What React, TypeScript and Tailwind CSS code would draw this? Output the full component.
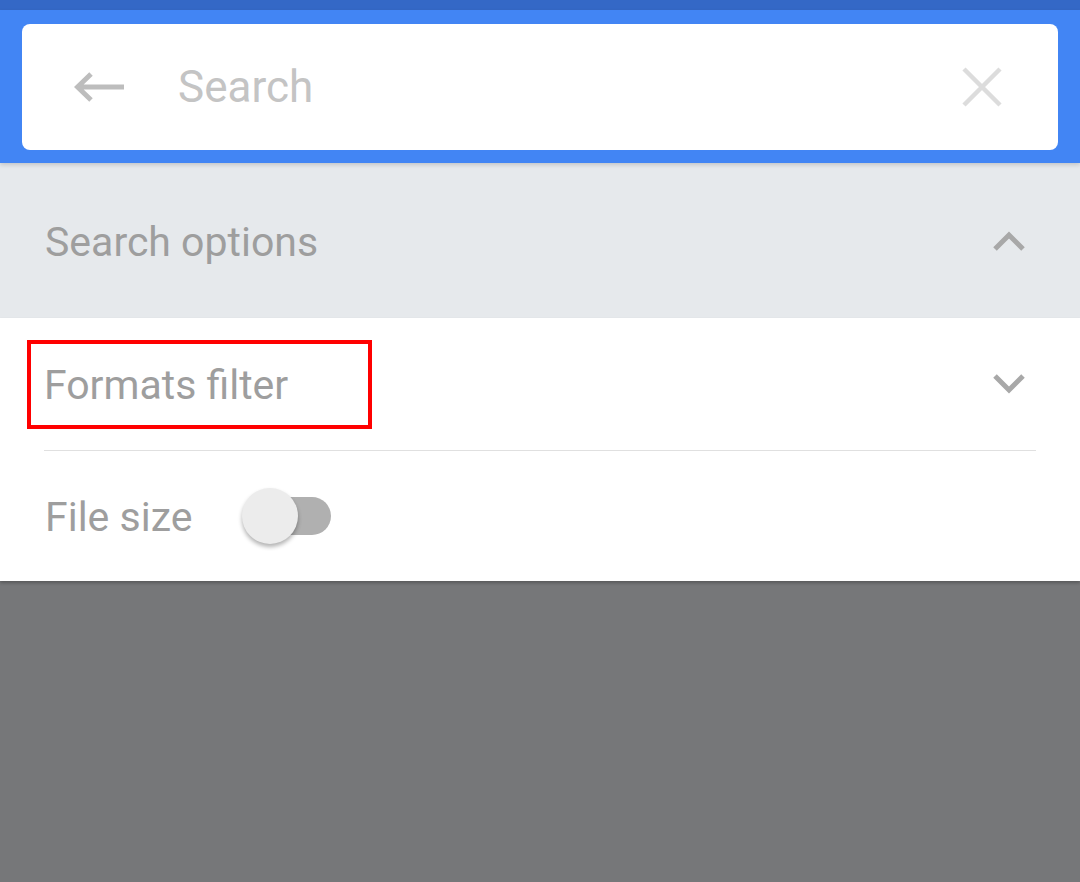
import React from "react";

export default function App() {
  return (
    <div
      className="w-[1080px] h-[882px] flex flex-col bg-[#767779] overflow-hidden"
      style={{ fontFamily: "Roboto, 'Noto Sans', sans-serif" }}
    >
      <div className="h-[10px] bg-[#3468c6] shrink-0" />
      <div className="bg-[#4285f4] h-[153px] shrink-0 px-[22px] pt-[14px] relative z-10 shadow-[0_2px_4px_rgba(0,0,0,0.15)]">
        <div className="h-[126px] bg-white rounded-[8px] flex items-center">
          <div className="w-[156px] flex items-center pl-[52px]">
            <svg width="52" height="30" viewBox="0 0 52 30">
              <path d="M50 15H4M17 2L3.5 15L17 28" fill="none" stroke="#bdbdbd" strokeWidth="5" />
            </svg>
          </div>
          <div className="flex-1 text-[44px] text-[#c4c4c4] leading-none">Search</div>
          <div className="w-[96px] flex items-center">
            <svg width="40" height="40" viewBox="0 0 40 40">
              <path d="M2 2L38 38M38 2L2 38" stroke="#dcdcdc" strokeWidth="4.5" />
            </svg>
          </div>
        </div>
      </div>
      <div className="h-[155px] bg-[#e6e9ec] flex items-center justify-between pl-[45px] pr-[54px] shrink-0">
        <span className="text-[41px] text-[#9e9e9e] leading-none pt-[4px]">Search options</span>
        <svg width="34" height="22" viewBox="0 0 34 22">
          <path d="M3 19L17 5L31 19" fill="none" stroke="#a8a8a8" strokeWidth="5" />
        </svg>
      </div>
      <div className="bg-white shrink-0 relative z-10 shadow-[0_2px_3px_rgba(0,0,0,0.25)]">
        <div className="h-[132px] flex items-center justify-between pl-[27px] pr-[54px]">
          <div className="w-[345px] h-[89px] border-[4px] border-[#ff0000] flex items-center pl-[13px]">
            <span className="text-[41px] text-[#9e9e9e] leading-none pt-[3px]">Formats filter</span>
          </div>
          <svg width="34" height="22" viewBox="0 0 34 22">
            <path d="M3 3L17 17L31 3" fill="none" stroke="#a8a8a8" strokeWidth="5" />
          </svg>
        </div>
        <div className="mx-[44px] h-[1px] bg-[#e0e0e0]" />
        <div className="h-[130px] flex items-center pl-[45px]">
          <span className="text-[41px] text-[#9e9e9e] leading-none pt-[3px]">File size</span>
          <div className="relative ml-[50px] w-[90px] h-[56px] flex items-center">
            <div className="absolute left-[10px] w-[79px] h-[38px] rounded-full bg-[#b0b0b0]" />
            <div className="absolute left-0 w-[56px] h-[56px] rounded-full bg-[#ececec] shadow-[0_3px_4px_rgba(0,0,0,0.3)]" />
          </div>
        </div>
      </div>
      <div className="flex-1" />
    </div>
  );
}
